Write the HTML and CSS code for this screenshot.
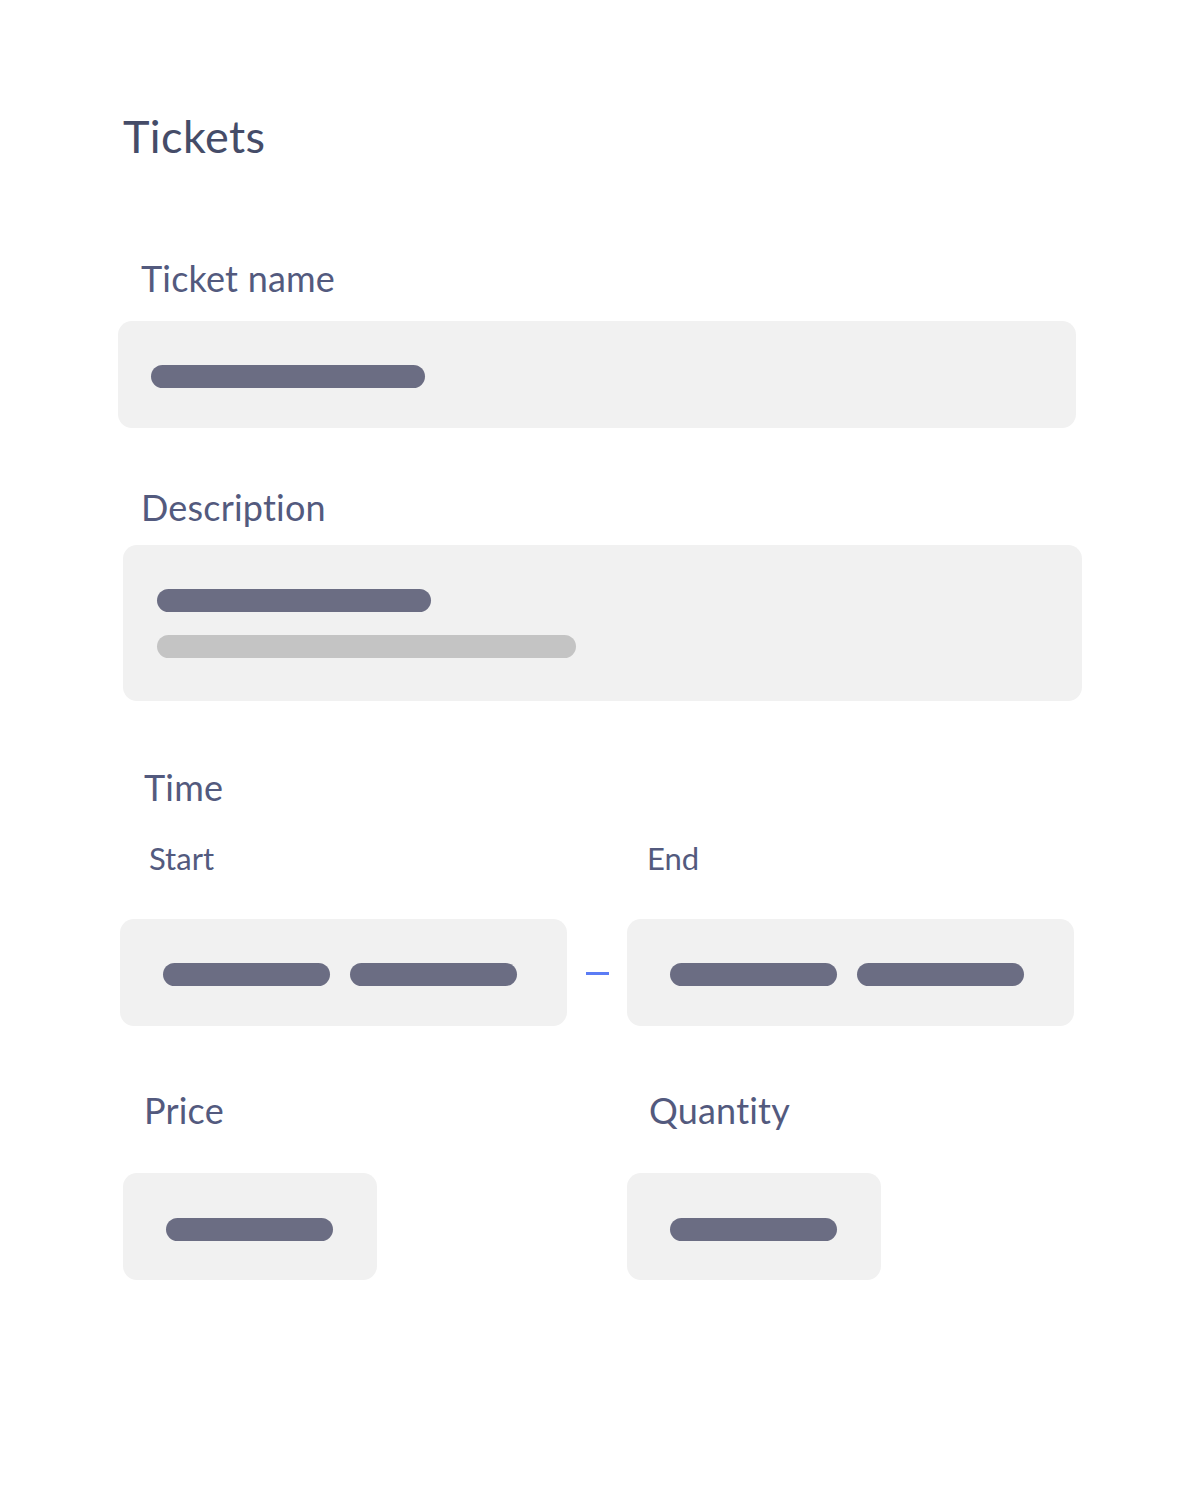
FILE: index.html
```html
<!DOCTYPE html>
<html>
<head>
<meta charset="utf-8">
<link rel="stylesheet" href="styles.css">
</head>
<body>
<main class="page">
  <h1 class="title">Tickets</h1>

  <section class="field field-name">
    <div class="label">Ticket name</div>
    <div class="box box-name"><span class="bar dark w274"></span></div>
  </section>

  <section class="field field-desc">
    <div class="label">Description</div>
    <div class="box box-desc">
      <span class="bar dark w274"></span>
      <span class="bar light w419"></span>
    </div>
  </section>

  <section class="field field-time">
    <div class="label">Time</div>
    <div class="time-row">
      <div class="time-col">
        <div class="sublabel sub-start">Start</div>
        <div class="box box-time">
          <span class="bar dark w167"></span>
          <span class="bar dark w167"></span>
        </div>
      </div>
      <div class="dash"></div>
      <div class="time-col">
        <div class="sublabel sub-end">End</div>
        <div class="box box-time">
          <span class="bar dark w167"></span>
          <span class="bar dark w167"></span>
        </div>
      </div>
    </div>
  </section>

  <section class="pq-row">
    <div class="pq-col pq-price">
      <div class="label">Price</div>
      <div class="box box-small"><span class="bar dark w167"></span></div>
    </div>
    <div class="pq-col pq-qty">
      <div class="label">Quantity</div>
      <div class="box box-small"><span class="bar dark w167"></span></div>
    </div>
  </section>
</main>
</body>
</html>
```
FILE: styles.css
```css
html, body {
  margin: 0;
  padding: 0;
  background: #ffffff;
}
body {
  font-family: Lato, "Open Sans", "Liberation Sans", sans-serif;
  color: #535a7e;
}
.page {
  width: 1200px;
  height: 1500px;
  box-sizing: border-box;
  padding-top: 108px;
}
.title {
  margin: 0 0 0 123px;
  font-size: 45px;
  line-height: 56px;
  font-weight: 400;
  color: #454c68;
  letter-spacing: 0.4px;
}
.label {
  font-size: 36px;
  line-height: 44px;
  font-weight: 400;
  color: #535a7e;
  letter-spacing: 0.2px;
}
.sublabel {
  font-size: 31px;
  line-height: 36px;
  color: #535a7e;
}
.box {
  background: #f1f1f1;
  border-radius: 14px;
  box-sizing: border-box;
  display: flex;
}
.bar {
  display: block;
  height: 23px;
  border-radius: 12px;
}
.bar.dark { background: #6b6d83; }
.bar.light { background: #c4c4c4; }
.w274 { width: 274px; }
.w419 { width: 419px; }
.w167 { width: 167px; }

/* Ticket name */
.field-name { margin: 92px 0 0 141px; }
.field-name .box {
  margin: 21px 0 0 -23px;
  width: 958px;
  height: 107px;
  align-items: center;
  padding: 4px 0 0 33px;
}

/* Description */
.field-desc { margin: 57px 0 0 141px; }
.field-desc .box {
  margin: 16px 0 0 -18px;
  width: 959px;
  height: 156px;
  flex-direction: column;
  padding: 44px 0 0 34px;
  gap: 23px;
}

/* Time */
.field-time { margin: 64px 0 0 144px; }
.time-row {
  display: flex;
  align-items: flex-end;
  margin: 31px 0 0 -24px;
}
.time-col { display: flex; flex-direction: column; }
.sub-start { margin-left: 29px; }
.sub-end { margin-left: 20px; }
.box-time {
  margin-top: 43px;
  width: 447px;
  height: 107px;
  align-items: center;
  padding: 4px 0 0 43px;
  gap: 20px;
}
.dash {
  width: 23px;
  height: 3px;
  background: #5b7cf5;
  margin: 0 18px 51px 19px;
}

/* Price / Quantity */
.pq-row {
  display: flex;
  margin: 62px 0 0 0;
}
.pq-col { display: flex; flex-direction: column; }
.pq-price { margin-left: 123px; width: 504px; }
.pq-price .label { margin-left: 21px; }
.pq-qty .label { margin-left: 22px; }
.box-small {
  margin-top: 41px;
  width: 254px;
  height: 107px;
  align-items: center;
  padding: 6px 0 0 43px;
}
```
